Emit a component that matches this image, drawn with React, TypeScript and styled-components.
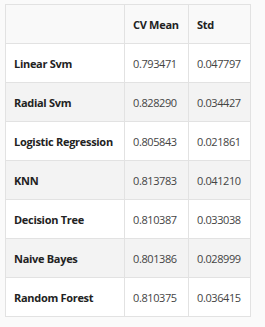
import React from 'react'
import styled, { createGlobalStyle } from 'styled-components'

type Result = {
  name: string
  mean: string
  std: string
}

const results: Result[] = [
  { name: 'Linear Svm', mean: '0.793471', std: '0.047797' },
  { name: 'Radial Svm', mean: '0.828290', std: '0.034427' },
  { name: 'Logistic Regression', mean: '0.805843', std: '0.021861' },
  { name: 'KNN', mean: '0.813783', std: '0.041210' },
  { name: 'Decision Tree', mean: '0.810387', std: '0.033038' },
  { name: 'Naive Bayes', mean: '0.801386', std: '0.028999' },
  { name: 'Random Forest', mean: '0.810375', std: '0.036415' },
]

const App = (): JSX.Element => {
  return (
    <Page>
      <GlobalStyle />
      <Table>
        <colgroup>
          <col style={{ width: 119 }} />
          <col style={{ width: 64 }} />
          <col style={{ width: 62 }} />
        </colgroup>
        <thead>
          <HeadRow>
            <HeadCell />
            <HeadCell>CV Mean</HeadCell>
            <HeadCell>Std</HeadCell>
          </HeadRow>
        </thead>
        <tbody>
          {results.map((result, index) => (
            <Row key={result.name} striped={index % 2 === 1}>
              <LabelCell>{result.name}</LabelCell>
              <ValueCell>{result.mean}</ValueCell>
              <ValueCell>{result.std}</ValueCell>
            </Row>
          ))}
        </tbody>
      </Table>
    </Page>
  )
}

const GlobalStyle = createGlobalStyle`
  html, body {
    margin: 0;
    padding: 0;
    background: #fafafa;
  }
`

const Page = styled.div`
  padding: 4px 0 0 5px;
  width: 265px;
  height: 327px;
  box-sizing: border-box;
  font-family: 'Open Sans', 'Liberation Sans', sans-serif;
`

const Table = styled.table`
  border-collapse: collapse;
  table-layout: fixed;
  width: 246px;
  border: 1px solid #e2e2e2;
`

const HeadRow = styled.tr`
  background: #f9f9f9;
  height: 39px;
`

const HeadCell = styled.th`
  border: 1px solid #e2e2e2;
  padding: 0 8px;
  text-align: left;
  font-size: 11px;
  font-weight: 700;
  letter-spacing: -0.3px;
  color: #222;
  white-space: nowrap;
`

const Row = styled.tr<{ striped: boolean }>`
  height: 39px;
  background: ${({ striped }) => (striped ? '#f3f3f3' : '#ffffff')};
`

const LabelCell = styled.td`
  border: 1px solid #e2e2e2;
  padding: 0 8px;
  font-size: 11px;
  font-weight: 700;
  letter-spacing: -0.3px;
  color: #222;
  white-space: nowrap;
`

const ValueCell = styled.td`
  border: 1px solid #e2e2e2;
  padding: 0 8px;
  font-size: 11px;
  letter-spacing: -0.4px;
  color: #444;
  white-space: nowrap;
`

export default App
